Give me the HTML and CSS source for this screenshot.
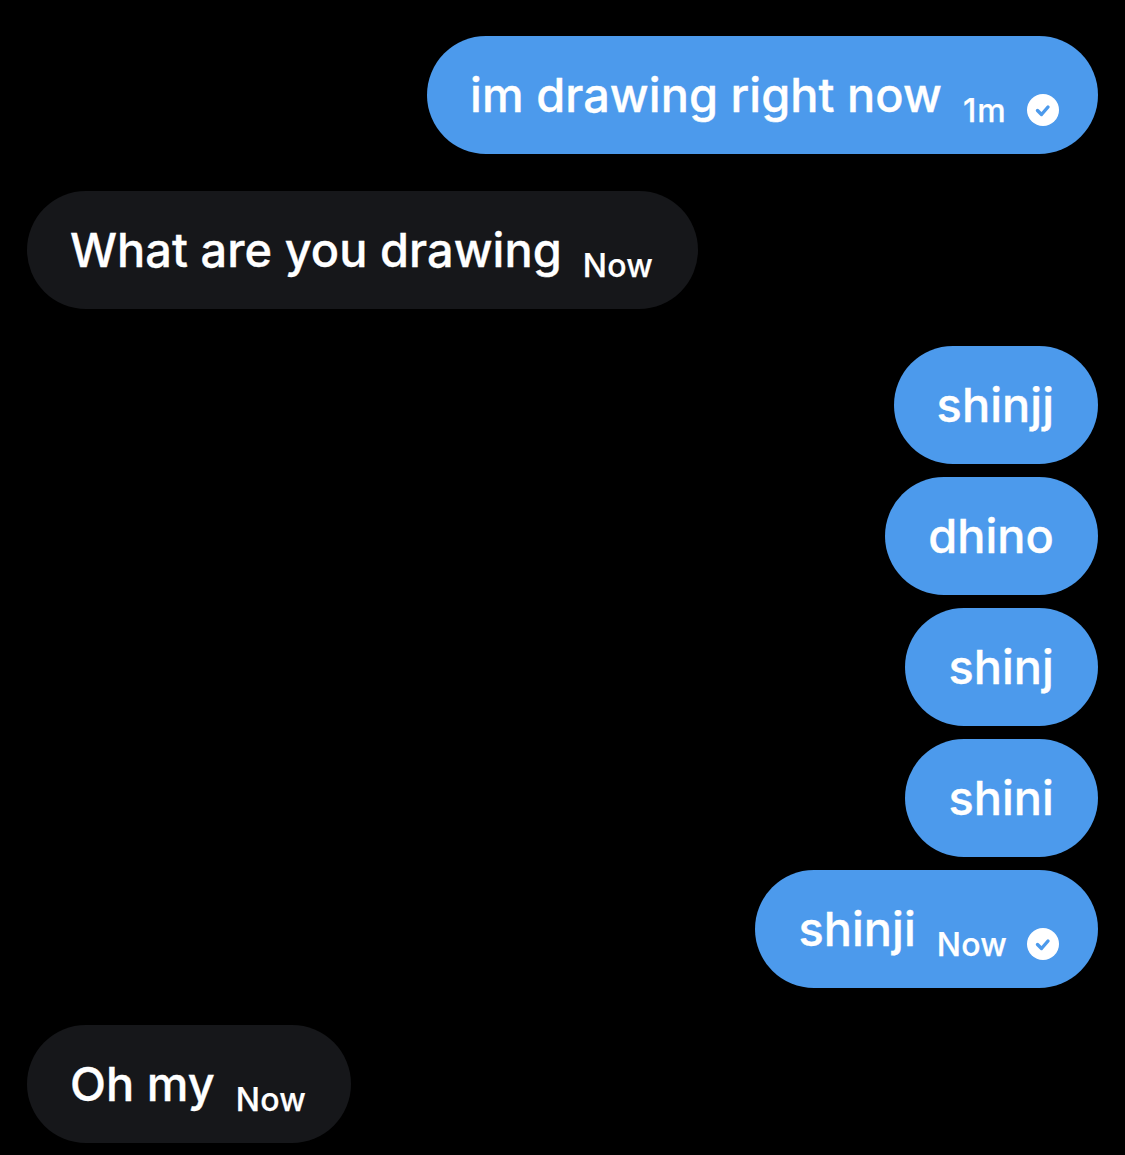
FILE: index.html
```html
<!DOCTYPE html>
<html lang="en">
<head>
    <meta charset="UTF-8">
    <title>Messages</title>
    <link rel="stylesheet" href="styles.css">
</head>
<body>
    <div class="chat">
        <div class="bubble sent first">
            <span class="text">im drawing right now</span>
            <span class="time">1m</span>
            <svg class="seen" viewBox="0 0 32 32"><circle cx="16" cy="16" r="16" fill="#fff"/><path d="M10.5 16.5l4 4 6.5-7.5" fill="none" stroke="#4c9aec" stroke-width="3.4" stroke-linecap="round" stroke-linejoin="round"/></svg>
        </div>
        <div class="bubble received group">
            <span class="text">What are you drawing</span>
            <span class="time">Now</span>
        </div>
        <div class="bubble sent group"><span class="text">shinjj</span></div>
        <div class="bubble sent"><span class="text">dhino</span></div>
        <div class="bubble sent"><span class="text">shinj</span></div>
        <div class="bubble sent"><span class="text">shini</span></div>
        <div class="bubble sent">
            <span class="text">shinji</span>
            <span class="time">Now</span>
            <svg class="seen" viewBox="0 0 32 32"><circle cx="16" cy="16" r="16" fill="#fff"/><path d="M10.5 16.5l4 4 6.5-7.5" fill="none" stroke="#4c9aec" stroke-width="3.4" stroke-linecap="round" stroke-linejoin="round"/></svg>
        </div>
        <div class="bubble received group">
            <span class="text">Oh my</span>
            <span class="time">Now</span>
        </div>
    </div>
</body>
</html>
```
FILE: styles.css
```css
body {
    margin: 0;
    background-color: #000;
    font-family: Inter, "Liberation Sans", sans-serif;
    color: #fff;
}

.chat {
    display: flex;
    flex-direction: column;
    padding: 36px 27px 0 27px;
    gap: 13px;
}

.bubble {
    display: flex;
    align-items: center;
    height: 118px;
    box-sizing: border-box;
    padding: 0 44px 0 43px;
    border-radius: 59px;
}

.bubble.sent {
    align-self: flex-end;
    background-color: #4c9aec;
}

.bubble.received {
    align-self: flex-start;
    padding-right: 45px;
    background-color: #16171a;
}

.bubble.group {
    margin-top: 24px;
}

.text {
    font-size: 46.9px;
    font-weight: 500;
    letter-spacing: 0.05px;
    -webkit-text-stroke: 0.35px #fff;
    margin-top: -1px;
}

.time {
    margin-left: 21px;
    margin-top: 30px;
    font-size: 32px;
    font-weight: 500;
    letter-spacing: 0.2px;
    -webkit-text-stroke: 0.25px #fff;
}

.first .time {
    letter-spacing: 1.2px;
}

.seen {
    width: 32px;
    height: 32px;
    margin-left: 20px;
    margin-right: -5px;
    margin-top: 30px;
}
```
